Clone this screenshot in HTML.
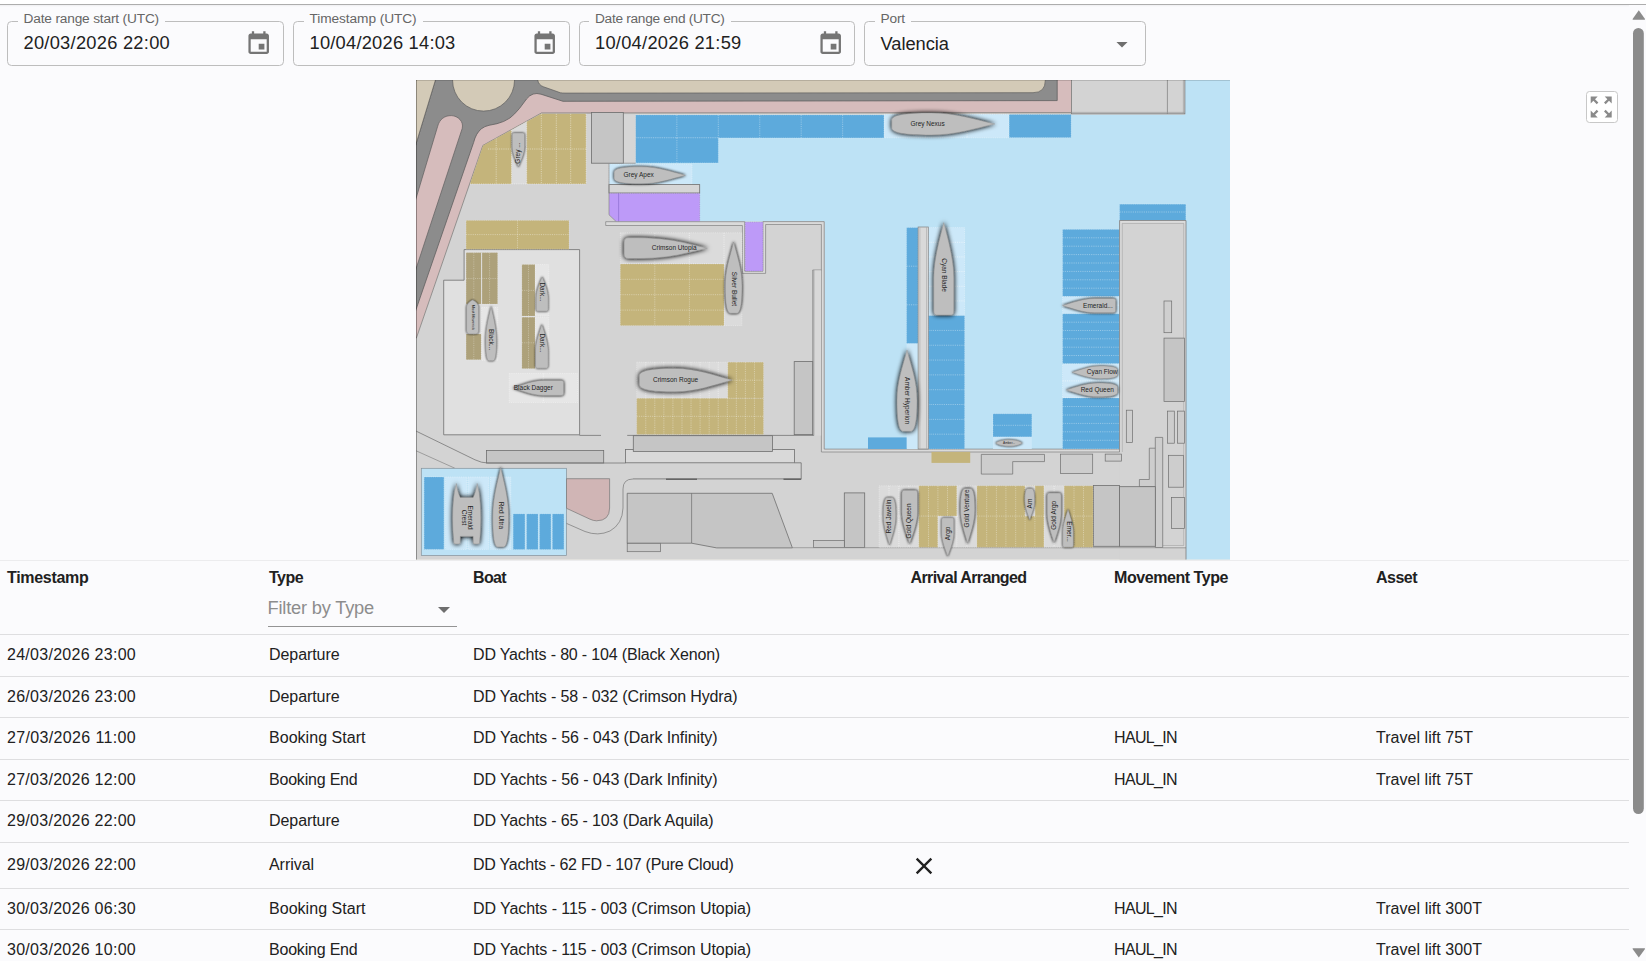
<!DOCTYPE html><html lang="en"><head><meta charset="utf-8"><title>Port movements</title><style>
*{box-sizing:border-box;margin:0;padding:0}
html,body{width:1646px;height:961px;overflow:hidden;background:#fbfbfd}
body{position:relative;font-family:"Liberation Sans",sans-serif;color:#212121}
.abs{position:absolute}
.topwhite{left:0;top:0;width:1646px;height:4px;background:#fff}
.topline{left:0;top:3.8px;width:1646px;height:1.3px;background:#adadad}
.topshade{left:0;top:5px;width:1646px;height:2px;background:linear-gradient(#efeff1,#fbfbfd)}
.field{top:21px;height:45px;width:277px;border:1px solid #bdbdbd;border-radius:4.5px}
.flabel{top:-10px;left:9.5px;padding:0 6px;background:#fbfbfd;font-size:13.7px;line-height:14px;color:#666;white-space:nowrap;position:absolute}
.fval{position:absolute;left:15.5px;top:10px;font-size:18.3px;line-height:22px;color:#212121;white-space:nowrap}
.cal{position:absolute;left:237px;top:7.5px;width:27.4px;height:27.4px}
.th{font-weight:bold;font-size:16px;line-height:20px;white-space:nowrap;color:#212121;top:568px}
.td{font-size:16px;line-height:20px;white-space:nowrap;color:#212121}
.hl{left:0;width:1629px;height:1px;background:#dedee0}
</style></head><body>
<div class="abs topwhite"></div><div class="abs topline"></div><div class="abs topshade"></div>
<div class="abs field" style="left:7px;width:276.5px"><span class="flabel" style="letter-spacing:-0.168px">Date range start (UTC)</span><span class="fval" style="letter-spacing:0.261px">20/03/2026 22:00</span><svg class="cal" viewBox="0 0 24 24"><path fill="#757575" d="M17 12h-5v5h5v-5zM16 1v2H8V1H6v2H5c-1.11 0-1.99.9-1.99 2L3 19c0 1.1.89 2 2 2h14c1.1 0 2-.9 2-2V5c0-1.1-.9-2-2-2h-1V1h-2zm3 18H5V8h14v11z"/></svg></div>
<div class="abs field" style="left:293px;width:276.5px"><span class="flabel" style="letter-spacing:-0.082px">Timestamp (UTC)</span><span class="fval" style="letter-spacing:0.229px">10/04/2026 14:03</span><svg class="cal" viewBox="0 0 24 24"><path fill="#757575" d="M17 12h-5v5h5v-5zM16 1v2H8V1H6v2H5c-1.11 0-1.99.9-1.99 2L3 19c0 1.1.89 2 2 2h14c1.1 0 2-.9 2-2V5c0-1.1-.9-2-2-2h-1V1h-2zm3 18H5V8h14v11z"/></svg></div>
<div class="abs field" style="left:578.5px;width:276.5px"><span class="flabel" style="letter-spacing:-0.296px">Date range end (UTC)</span><span class="fval" style="letter-spacing:0.261px">10/04/2026 21:59</span><svg class="cal" viewBox="0 0 24 24"><path fill="#757575" d="M17 12h-5v5h5v-5zM16 1v2H8V1H6v2H5c-1.11 0-1.99.9-1.99 2L3 19c0 1.1.89 2 2 2h14c1.1 0 2-.9 2-2V5c0-1.1-.9-2-2-2h-1V1h-2zm3 18H5V8h14v11z"/></svg></div>
<div class="abs field" style="left:864px;width:282px"><span class="flabel" style="letter-spacing:-0.152px">Port</span><span class="fval" style="letter-spacing:-0.035px;top:11px">Valencia</span><svg style="position:absolute;left:250.5px;top:20px;width:12px;height:6.5px" viewBox="0 0 12 7"><path fill="#6e6e6e" d="M0 0h12L6 6z"/></svg></div>
<div class="abs" style="left:1585.5px;top:91px;width:32.5px;height:32px;border:1px solid #c8c8c8;border-radius:3.5px;background:#fff"><svg style="position:absolute;left:0.8px;top:1.3px;width:28.4px;height:28px" viewBox="0 0 24 24"><path fill="#8a8a8a" d="M15 3l2.3 2.3-2.89 2.87 1.42 1.42L18.7 6.7 21 9V3h-6zM3 9l2.3-2.3 2.87 2.89 1.42-1.42L6.7 5.3 9 3H3v6zm6 12l-2.3-2.3 2.89-2.87-1.42-1.42L5.3 17.3 3 15v6h6zm12-6l-2.3 2.3-2.87-2.89-1.42 1.42 2.89 2.87L15 21h6v-6z"/></svg></div>
<svg class="abs" style="left:0;top:0" width="1646" height="961" viewBox="0 0 1646 961">
<defs><clipPath id="mc"><rect x="416" y="80" width="814" height="479.6"/></clipPath>
<filter id="sh0" x="-40%" y="-40%" width="180%" height="180%"><feGaussianBlur in="SourceAlpha" stdDeviation="0.9"/><feOffset dy="0.3"/><feComponentTransfer><feFuncA type="linear" slope="1.0"/></feComponentTransfer><feMerge><feMergeNode/><feMergeNode in="SourceGraphic"/></feMerge></filter>
<filter id="sh1" x="-40%" y="-40%" width="180%" height="180%"><feGaussianBlur in="SourceAlpha" stdDeviation="1.5"/><feOffset dy="0.3"/><feComponentTransfer><feFuncA type="linear" slope="1.2"/></feComponentTransfer><feMerge><feMergeNode/><feMergeNode in="SourceGraphic"/></feMerge></filter>
<filter id="sh2" x="-40%" y="-40%" width="180%" height="180%"><feGaussianBlur in="SourceAlpha" stdDeviation="2.4"/><feOffset dy="0.3"/><feComponentTransfer><feFuncA type="linear" slope="1.25"/></feComponentTransfer><feMerge><feMergeNode/><feMergeNode in="SourceGraphic"/></feMerge></filter>
</defs>
<g clip-path="url(#mc)">
<rect x="416" y="80" width="814" height="479.6" fill="#d3cab7"/>
<polygon points="410,356.5 482.9,145.4 541.1,113.2 1071.6,112.6 1071.6,70 410,70" fill="#d6bcbc"/>
<path d="M 410,163.7 L 438.5,70 L 1057.2,70 L 1057.2,100.6 L 563,101.3 L 541,94.2 Q 532.5,91.5 526.5,99 L 519.6,108.3 Q 514.5,114.5 509.8,118.1 Q 504,122 497,123.7 L 489,125.3 Q 484.5,126.3 481.5,128.7 Q 476,133 473.6,142.5 L 410,327 Z" fill="#8c8c8c" stroke="#5f5f5f" stroke-width="0.8"/>
<path d="M 410,218.5 L 437.6,126.5 C 439.5,119 445,115.4 451.5,115.6 C 458,115.9 464,121.5 462.2,128.5 L 410,287 Z" fill="#d6bcbc" stroke="#5f5f5f" stroke-width="0.7"/>
<polygon points="410,70 438.5,70 410,163.7" fill="#d3cab7" stroke="#5f5f5f" stroke-width="0.7"/>
<circle cx="483.55" cy="80.1" r="31" fill="#d3cab7" stroke="#5f5f5f" stroke-width="0.7"/>
<path d="M 537.7,70 L 537.7,80 Q 538.5,85 543.5,86.8 L 560.5,92.8 Q 562,93.1 566,93.1 L 1033,92.7 Q 1045.3,92.7 1045.3,80.5 L 1045.3,70 Z" fill="#d3cab7" stroke="#5f5f5f" stroke-width="0.7"/>
<polygon points="410,356.5 416.3,338.3 482.9,145.4 541.1,113.2 1071.6,113.2 1071.6,70 1184.9,70 1184.9,113.8 1186,113.8 1186,570 410,570" fill="#d3d3d3"/>
<line x1="416.3" y1="338.3" x2="482.9" y2="145.4" stroke="#777" stroke-width="0.7"/>
<line x1="482.9" y1="145.4" x2="541.1" y2="113.2" stroke="#777" stroke-width="0.7"/>
<line x1="541.1" y1="113" x2="1071.6" y2="112.7" stroke="#777" stroke-width="0.8"/>
<path d="M 635.4,114.8 L 1184.9,114.8 L 1184.9,70 L 1240,70 L 1240,570 L 1186,570 L 1186,220.5 L 1119.6,220.5 L 1119.6,449 L 824.6,449 L 824.6,221.5 L 699.7,221.5 L 699.7,193.2 L 699.7,184.5 L 609,184.5 L 609,163.4 L 635.4,163.4 Z" fill="#bde2f5"/>
<rect x="1071.6" y="70" width="113.3" height="43.8" fill="#d3d3d3" stroke="#7a7a7a" stroke-width="0.8"/>
<line x1="1167.4" y1="80" x2="1167.4" y2="113.8" stroke="#7a7a7a" stroke-width="0.7"/>
<line x1="1071.6" y1="112.4" x2="1184.9" y2="112.4" stroke="#999" stroke-width="0.6"/>
<line x1="1183.4" y1="80" x2="1183.4" y2="113.8" stroke="#999" stroke-width="0.6"/>
<rect x="635.4" y="115" width="248.7" height="22.9" fill="#5daadc"/>
<path d="M676.85 115V137.9M718.3 115V137.9M759.75 115V137.9M801.2 115V137.9M842.65 115V137.9" fill="none" stroke="#fff" stroke-opacity="0.55" stroke-width="0.65" stroke-dasharray="1.1 1.1"/>
<rect x="635.4" y="115" width="248.7" height="22.9" fill="none" stroke="#fff" stroke-opacity="0.33" stroke-width="0.7" stroke-dasharray="1.1 1.1"/>
<rect x="635.4" y="137.9" width="82.9" height="25" fill="#5daadc"/>
<path d="M676.9 137.9V162.9" fill="none" stroke="#fff" stroke-opacity="0.55" stroke-width="0.65" stroke-dasharray="1.1 1.1"/>
<rect x="635.4" y="137.9" width="82.9" height="25" fill="none" stroke="#fff" stroke-opacity="0.33" stroke-width="0.7" stroke-dasharray="1.1 1.1"/>
<rect x="884.1" y="114.3" width="124.5" height="23.5" fill="#cce8f9"/>
<path d="M925.5 114.3V137.8M967.1 114.3V137.8" fill="none" stroke="#fff" stroke-opacity="0.8" stroke-width="0.65" stroke-dasharray="1.1 1.1"/>
<rect x="884.1" y="114.3" width="124.5" height="23.5" fill="none" stroke="#fff" stroke-opacity="0.48" stroke-width="0.7" stroke-dasharray="1.1 1.1"/>
<rect x="1009.2" y="114.5" width="61.9" height="23.1" fill="#5daadc"/>
<rect x="1009.2" y="114.5" width="61.9" height="23.1" fill="none" stroke="#fff" stroke-opacity="0.33" stroke-width="0.7" stroke-dasharray="1.1 1.1"/>
<rect x="609" y="164.3" width="83" height="20" fill="#cce8f9"/>
<path d="M650.5 164.3V184.3" fill="none" stroke="#fff" stroke-opacity="0.8" stroke-width="0.65" stroke-dasharray="1.1 1.1"/>
<rect x="609" y="164.3" width="83" height="20" fill="none" stroke="#fff" stroke-opacity="0.48" stroke-width="0.7" stroke-dasharray="1.1 1.1"/>
<rect x="623.3" y="115" width="12.3" height="48.2" fill="#d6d6d6"/>
<line x1="623.3" y1="163.2" x2="635.6" y2="163.2" stroke="#8a8a8a" stroke-width="0.7"/>
<rect x="591.5" y="112.5" width="31.8" height="50.7" fill="#c5c5c5" stroke="#6e6e6e" stroke-width="0.8"/>
<rect x="609" y="184.6" width="90.7" height="8.4" fill="#d6d6d6" stroke="#6e6e6e" stroke-width="0.8"/>
<polygon points="609,193.4 699.7,193.4 699.7,221.7 616.3,221.7 609,214.8" fill="#bd9af8"/>
<line x1="618.6" y1="193.4" x2="618.6" y2="221.7" stroke="#8d6fd0" stroke-width="0.7"/>
<path d="M609 193.4H699.7V221.7" fill="none" stroke="#7a5cc0" stroke-opacity=".55" stroke-width="0.6" stroke-dasharray="1.1 1.1"/>
<line x1="609" y1="163.4" x2="609" y2="214.8" stroke="#8a8a8a" stroke-width="0.7"/>
<line x1="609" y1="214.8" x2="616.3" y2="221.7" stroke="#8a8a8a" stroke-width="0.7"/>
<path d="M 605.7,223.6 L 743.5,223.6 L 743.5,273 " fill="none" stroke="#dcdcdc" stroke-width="3.8"/>
<path d="M 605.7,221.7 L 744.7,221.7 L 744.7,271.2 L 762.9,271.2 L 762.9,221.6 L 824.2,221.6 L 824.2,449.1 L 1120.6,449.1 L 1120.6,220.4 L 1123,220.4 L 1123,452 L 821.4,452 L 821.4,224.5 L 765.6,224.5 L 765.6,273.4 L 742.4,273.4 L 742.4,225.5 L 605.7,225.5 Z" fill="#dadada" stroke="#808080" stroke-width="0.7"/>
<rect x="745.3" y="222.2" width="17.5" height="48.8" fill="#bd9af8"/>
<rect x="745.3" y="222.2" width="17.5" height="48.8" fill="none" stroke="#7a5cc0" stroke-opacity=".5" stroke-width="0.6" stroke-dasharray="1.1 1.1"/>
<path d="M 821.4,270 L 812.7,270 L 812.7,435.6" fill="none" stroke="#808080" stroke-width="0.7"/>
<rect x="813.1" y="270.4" width="8" height="165.2" fill="#d8d8d8"/>
<rect x="906.6" y="227.6" width="11.5" height="116" fill="#5daadc"/>
<path d="M906.6 266.2H918.1M906.6 304.8H918.1" fill="none" stroke="#fff" stroke-opacity="0.55" stroke-width="0.65" stroke-dasharray="1.1 1.1"/>
<rect x="906.6" y="227.6" width="11.5" height="116" fill="none" stroke="#fff" stroke-opacity="0.33" stroke-width="0.7" stroke-dasharray="1.1 1.1"/>
<rect x="906.6" y="343.6" width="11.5" height="105.4" fill="#cce8f9"/>
<rect x="868" y="437.4" width="38.6" height="11.6" fill="#5daadc"/>
<rect x="928.4" y="227.6" width="36.2" height="88" fill="#cce8f9"/>
<path d="M928.4 242.27H964.6M928.4 256.93H964.6M928.4 271.6H964.6M928.4 286.27H964.6M928.4 300.93H964.6" fill="none" stroke="#fff" stroke-opacity="0.8" stroke-width="0.65" stroke-dasharray="1.1 1.1"/>
<rect x="928.4" y="227.6" width="36.2" height="88" fill="none" stroke="#fff" stroke-opacity="0.48" stroke-width="0.7" stroke-dasharray="1.1 1.1"/>
<rect x="928.4" y="315.6" width="36.2" height="133.4" fill="#5daadc"/>
<path d="M928.4 330.42H964.6M928.4 345.24H964.6M928.4 360.07H964.6M928.4 374.89H964.6M928.4 389.71H964.6M928.4 404.53H964.6M928.4 419.36H964.6M928.4 434.18H964.6" fill="none" stroke="#fff" stroke-opacity="0.55" stroke-width="0.65" stroke-dasharray="1.1 1.1"/>
<rect x="928.4" y="315.6" width="36.2" height="133.4" fill="none" stroke="#fff" stroke-opacity="0.33" stroke-width="0.7" stroke-dasharray="1.1 1.1"/>
<rect x="918.1" y="227" width="10.2" height="222" fill="#d9d9d9" stroke="#808080" stroke-width="0.7"/>
<line x1="919.9" y1="227" x2="919.9" y2="449" stroke="#a8a8a8" stroke-width="0.6"/>
<line x1="926.5" y1="227" x2="926.5" y2="449" stroke="#a8a8a8" stroke-width="0.6"/>
<rect x="993" y="413.8" width="38.8" height="23.1" fill="#5daadc"/>
<path d="M993 425.3H1031.8" fill="none" stroke="#fff" stroke-opacity="0.55" stroke-width="0.65" stroke-dasharray="1.1 1.1"/>
<rect x="993" y="413.8" width="38.8" height="23.1" fill="none" stroke="#fff" stroke-opacity="0.33" stroke-width="0.7" stroke-dasharray="1.1 1.1"/>
<rect x="993" y="436.9" width="38.8" height="12" fill="#cce8f9"/>
<rect x="1062.6" y="229.4" width="57.2" height="67.2" fill="#5daadc"/>
<path d="M1062.6 237.8H1119.8M1062.6 246.2H1119.8M1062.6 254.6H1119.8M1062.6 263H1119.8M1062.6 271.4H1119.8M1062.6 279.8H1119.8M1062.6 288.2H1119.8" fill="none" stroke="#fff" stroke-opacity="0.55" stroke-width="0.65" stroke-dasharray="1.1 1.1"/>
<rect x="1062.6" y="229.4" width="57.2" height="67.2" fill="none" stroke="#fff" stroke-opacity="0.33" stroke-width="0.7" stroke-dasharray="1.1 1.1"/>
<rect x="1062.6" y="296.6" width="57.2" height="17.2" fill="#cce8f9"/>
<path d="M1062.6 305.2H1119.8" fill="none" stroke="#fff" stroke-opacity="0.8" stroke-width="0.65" stroke-dasharray="1.1 1.1"/>
<rect x="1062.6" y="296.6" width="57.2" height="17.2" fill="none" stroke="#fff" stroke-opacity="0.48" stroke-width="0.7" stroke-dasharray="1.1 1.1"/>
<rect x="1062.6" y="313.8" width="57.2" height="50" fill="#5daadc"/>
<path d="M1062.6 322.2H1119.8M1062.6 330.5H1119.8M1062.6 338.8H1119.8M1062.6 347.2H1119.8M1062.6 355.5H1119.8" fill="none" stroke="#fff" stroke-opacity="0.55" stroke-width="0.65" stroke-dasharray="1.1 1.1"/>
<rect x="1062.6" y="313.8" width="57.2" height="50" fill="none" stroke="#fff" stroke-opacity="0.33" stroke-width="0.7" stroke-dasharray="1.1 1.1"/>
<rect x="1062.6" y="363.8" width="57.2" height="34.2" fill="#cce8f9"/>
<path d="M1062.6 380.9H1119.8" fill="none" stroke="#fff" stroke-opacity="0.8" stroke-width="0.65" stroke-dasharray="1.1 1.1"/>
<rect x="1062.6" y="363.8" width="57.2" height="34.2" fill="none" stroke="#fff" stroke-opacity="0.48" stroke-width="0.7" stroke-dasharray="1.1 1.1"/>
<rect x="1062.6" y="398" width="57.2" height="50.9" fill="#5daadc"/>
<path d="M1062.6 406.5H1119.8M1062.6 415H1119.8M1062.6 423.4H1119.8M1062.6 431.8H1119.8M1062.6 440.3H1119.8" fill="none" stroke="#fff" stroke-opacity="0.55" stroke-width="0.65" stroke-dasharray="1.1 1.1"/>
<rect x="1062.6" y="398" width="57.2" height="50.9" fill="none" stroke="#fff" stroke-opacity="0.33" stroke-width="0.7" stroke-dasharray="1.1 1.1"/>
<rect x="1119.6" y="204.2" width="66.2" height="16.3" fill="#5daadc"/>
<path d="M1119.6 212H1185.8" fill="none" stroke="#fff" stroke-opacity="0.55" stroke-width="0.65" stroke-dasharray="1.1 1.1"/>
<rect x="1119.6" y="204.2" width="66.2" height="16.3" fill="none" stroke="#fff" stroke-opacity="0.33" stroke-width="0.7" stroke-dasharray="1.1 1.1"/>
<rect x="1119.6" y="220.5" width="66.4" height="349.5" fill="#d3d3d3"/>
<polygon points="1119.6,220.5 1186,220.5 1186,547.8 1162.7,547.8 1162.7,545.6 1183.8,545.6 1183.8,223.4 1122.2,223.4 1122.2,452 1119.6,452" fill="#dcdcdc"/>
<path d="M 1122.2,452 L 1122.2,223.4 L 1183.8,223.4 L 1183.8,545.6 L 1162.7,545.6" fill="none" stroke="#9c9c9c" stroke-width="0.6"/>
<path d="M 1119.6,452 L 1119.6,220.5 L 1186,220.5 L 1186,570" fill="none" stroke="#7c7c7c" stroke-width="0.8"/>
<line x1="1162.7" y1="547.8" x2="1186" y2="547.8" stroke="#808080" stroke-width="0.7"/>
<rect x="1164" y="301" width="7.7" height="31.7" fill="#cfcfcf" stroke="#6e6e6e" stroke-width="0.7"/>
<rect x="1164" y="338.1" width="20.4" height="63.3" fill="#c5c5c5" stroke="#6e6e6e" stroke-width="0.7"/>
<rect x="1126.3" y="410.2" width="6.3" height="32.3" fill="#cfcfcf" stroke="#6e6e6e" stroke-width="0.7"/>
<rect x="1167.5" y="411.1" width="6.8" height="32.1" fill="#cdcdcd" stroke="#6e6e6e" stroke-width="0.7"/>
<rect x="1177.4" y="411.1" width="7.1" height="32.1" fill="#cdcdcd" stroke="#6e6e6e" stroke-width="0.7"/>
<rect x="1168.4" y="455.3" width="15.2" height="31.9" fill="#cdcdcd" stroke="#6e6e6e" stroke-width="0.7"/>
<rect x="1171.4" y="497.4" width="13.1" height="31" fill="#cdcdcd" stroke="#6e6e6e" stroke-width="0.7"/>
<path d="M 1155.3,437.4 L 1162.7,437.4 L 1162.7,547.5 L 1155.3,547.5 L 1155.3,486.7 L 1139.4,486.7 L 1139.4,479.5 L 1149.3,479.5 L 1149.3,448.2 L 1155.3,448.2 Z" fill="#cdcdcd" stroke="#6e6e6e" stroke-width="0.7"/>
<line x1="1155.3" y1="448.2" x2="1155.3" y2="486.7" stroke="#6e6e6e" stroke-width="0.7"/>
<polygon points="464.1,249.6 579.6,249.6 579.6,434.8 443.7,434.8 443.7,280.2 464.1,280.2" fill="#e0e0e0" stroke="#6e6e6e" stroke-width="0.8"/>
<polygon points="541.1,113.8 586.1,113.8 586.1,183.9 470,183.9 483.1,145.6" fill="#c4b47b"/>
<polygon points="511.5,129.9 526.7,121.5 526.7,183.9 511.5,183.9" fill="#dbdbdb"/>
<path d="M496.2 138.4V183.9M511.5 129.9V183.9M526.7 121.5V183.9M541.3 113.8V183.9M556.3 113.8V183.9M570.7 113.8V183.9M488 149H586.1M470 183.9H586.1M586.1 113.8V183.9" fill="none" stroke="#fff" stroke-opacity=".55" stroke-width="0.8" stroke-dasharray="1.1 1.1"/>
<rect x="466.1" y="220.4" width="102.9" height="28.8" fill="#c4b47b"/>
<path d="M517.5 220.4V249.2M466.1 234.6H569" fill="none" stroke="#fff" stroke-opacity="0.55" stroke-width="0.65" stroke-dasharray="1.1 1.1"/>
<rect x="466.1" y="220.4" width="102.9" height="28.8" fill="none" stroke="#fff" stroke-opacity="0.33" stroke-width="0.7" stroke-dasharray="1.1 1.1"/>
<rect x="466.1" y="252.6" width="31.5" height="51.4" fill="#ada17a"/>
<path d="M473.8 252.6V304M481.6 252.6V304M489.6 252.6V304M466.1 278.5H497.6" fill="none" stroke="#fff" stroke-opacity="0.45" stroke-width="0.65" stroke-dasharray="1.1 1.1"/>
<rect x="466.1" y="252.6" width="31.5" height="51.4" fill="none" stroke="#fff" stroke-opacity="0.27" stroke-width="0.7" stroke-dasharray="1.1 1.1"/>
<rect x="481.1" y="252.6" width="1" height="51.4" fill="#e0e0e0"/>
<rect x="466.1" y="334" width="15.1" height="25.7" fill="#ada17a"/>
<path d="M473.8 334V359.7" fill="none" stroke="#fff" stroke-opacity="0.45" stroke-width="0.65" stroke-dasharray="1.1 1.1"/>
<rect x="466.1" y="334" width="15.1" height="25.7" fill="none" stroke="#fff" stroke-opacity="0.27" stroke-width="0.7" stroke-dasharray="1.1 1.1"/>
<rect x="481.7" y="307.5" width="16.1" height="52.8" fill="#e6e6e6"/>
<rect x="481.7" y="307.5" width="16.1" height="52.8" fill="none" stroke="#fff" stroke-opacity="0.48" stroke-width="0.7" stroke-dasharray="1.1 1.1"/>
<rect x="521.9" y="264.5" width="13.1" height="51.5" fill="#ada17a"/>
<path d="M528.5 264.5V316M521.9 290.4H535" fill="none" stroke="#fff" stroke-opacity="0.45" stroke-width="0.65" stroke-dasharray="1.1 1.1"/>
<rect x="521.9" y="264.5" width="13.1" height="51.5" fill="none" stroke="#fff" stroke-opacity="0.27" stroke-width="0.7" stroke-dasharray="1.1 1.1"/>
<rect x="521.9" y="317.2" width="13.1" height="51.4" fill="#ada17a"/>
<path d="M528.5 317.2V368.6M521.9 342.8H535" fill="none" stroke="#fff" stroke-opacity="0.45" stroke-width="0.65" stroke-dasharray="1.1 1.1"/>
<rect x="521.9" y="317.2" width="13.1" height="51.4" fill="none" stroke="#fff" stroke-opacity="0.27" stroke-width="0.7" stroke-dasharray="1.1 1.1"/>
<rect x="535.4" y="264.5" width="13.4" height="51.5" fill="#e6e6e6"/>
<rect x="535.4" y="264.5" width="13.4" height="51.5" fill="none" stroke="#fff" stroke-opacity="0.48" stroke-width="0.7" stroke-dasharray="1.1 1.1"/>
<rect x="535.4" y="317.2" width="13.4" height="51.4" fill="#e6e6e6"/>
<rect x="535.4" y="317.2" width="13.4" height="51.4" fill="none" stroke="#fff" stroke-opacity="0.48" stroke-width="0.7" stroke-dasharray="1.1 1.1"/>
<rect x="509.2" y="373.4" width="68.3" height="29.1" fill="#e6e6e6"/>
<path d="M543.3 373.4V402.5" fill="none" stroke="#fff" stroke-opacity="0.8" stroke-width="0.65" stroke-dasharray="1.1 1.1"/>
<rect x="509.2" y="373.4" width="68.3" height="29.1" fill="none" stroke="#fff" stroke-opacity="0.48" stroke-width="0.7" stroke-dasharray="1.1 1.1"/>
<rect x="620.3" y="232.8" width="121.6" height="30.7" fill="#dbdbdb"/>
<path d="M654.8 232.8V263.5M689.3 232.8V263.5M724 232.8V263.5" fill="none" stroke="#fff" stroke-opacity="0.8" stroke-width="0.65" stroke-dasharray="1.1 1.1"/>
<rect x="620.3" y="232.8" width="121.6" height="30.7" fill="none" stroke="#fff" stroke-opacity="0.48" stroke-width="0.7" stroke-dasharray="1.1 1.1"/>
<rect x="724" y="263.5" width="17.9" height="62.1" fill="#dbdbdb"/>
<rect x="724" y="263.5" width="17.9" height="62.1" fill="none" stroke="#fff" stroke-opacity="0.48" stroke-width="0.7" stroke-dasharray="1.1 1.1"/>
<rect x="620.3" y="264" width="103.7" height="61.6" fill="#c4b47b"/>
<path d="M654.8 264V325.6M689.4 264V325.6M620.3 279.3H724M620.3 294.7H724M620.3 310.1H724" fill="none" stroke="#fff" stroke-opacity="0.55" stroke-width="0.65" stroke-dasharray="1.1 1.1"/>
<rect x="620.3" y="264" width="103.7" height="61.6" fill="none" stroke="#fff" stroke-opacity="0.33" stroke-width="0.7" stroke-dasharray="1.1 1.1"/>
<rect x="636.7" y="362.2" width="91.1" height="36.1" fill="#dbdbdb"/>
<path d="M645.76 362.2V398.3M654.81 362.2V398.3M663.87 362.2V398.3M672.93 362.2V398.3M681.99 362.2V398.3M691.04 362.2V398.3M700.1 362.2V398.3M709.16 362.2V398.3M718.21 362.2V398.3M636.7 380.2H727.8" fill="none" stroke="#fff" stroke-opacity="0.7" stroke-width="0.65" stroke-dasharray="1.1 1.1"/>
<rect x="636.7" y="362.2" width="91.1" height="36.1" fill="none" stroke="#fff" stroke-opacity="0.42" stroke-width="0.7" stroke-dasharray="1.1 1.1"/>
<rect x="727.8" y="362.2" width="35.7" height="36.1" fill="#c4b47b"/>
<path d="M736.33 362.2V398.3M745.38 362.2V398.3M754.44 362.2V398.3M727.8 380.2H763.5" fill="none" stroke="#fff" stroke-opacity="0.55" stroke-width="0.65" stroke-dasharray="1.1 1.1"/>
<rect x="727.8" y="362.2" width="35.7" height="36.1" fill="none" stroke="#fff" stroke-opacity="0.33" stroke-width="0.7" stroke-dasharray="1.1 1.1"/>
<rect x="636.7" y="398.3" width="126.8" height="36.2" fill="#c4b47b"/>
<path d="M645.76 398.3V434.5M654.81 398.3V434.5M663.87 398.3V434.5M672.93 398.3V434.5M681.99 398.3V434.5M691.04 398.3V434.5M700.1 398.3V434.5M709.16 398.3V434.5M718.21 398.3V434.5M727.27 398.3V434.5M736.33 398.3V434.5M745.38 398.3V434.5M754.44 398.3V434.5M636.7 416.3H763.5" fill="none" stroke="#fff" stroke-opacity="0.55" stroke-width="0.65" stroke-dasharray="1.1 1.1"/>
<rect x="636.7" y="398.3" width="126.8" height="36.2" fill="none" stroke="#fff" stroke-opacity="0.33" stroke-width="0.7" stroke-dasharray="1.1 1.1"/>
<line x1="813.8" y1="270" x2="813.8" y2="435.6" stroke="#808080" stroke-width="0.7"/>
<rect x="794.2" y="361.6" width="18.5" height="73" fill="#c5c5c5" stroke="#6e6e6e" stroke-width="0.8"/>
<line x1="579.4" y1="435.4" x2="601" y2="435.4" stroke="#808080" stroke-width="0.9"/>
<line x1="627.2" y1="435.4" x2="813.8" y2="435.4" stroke="#808080" stroke-width="0.9"/>
<path d="M 794.6,462.8 L 801.2,462.8 L 801.2,478.9 L 633,478.9" fill="none" stroke="#6e6e6e" stroke-width="0.8"/>
<rect x="625.5" y="449.5" width="169.1" height="13.3" fill="#d9d9d9" stroke="#6e6e6e" stroke-width="0.8"/>
<rect x="633.3" y="435.7" width="139.1" height="15.7" fill="#c5c5c5" stroke="#6e6e6e" stroke-width="0.8"/>
<path d="M666 479.3H697M783.5 479.3H801.2" stroke="#666" stroke-width="1.4" fill="none"/>
<rect x="486.4" y="450.4" width="117.3" height="12.6" fill="#c5c5c5" stroke="#6e6e6e" stroke-width="0.8"/>
<path d="M 416.3,431.2 L 475,459.8 Q 481.5,463 488,463 L 625.5,463" fill="none" stroke="#777" stroke-width="0.8"/>
<line x1="416.3" y1="450.9" x2="454.8" y2="468.2" stroke="#777" stroke-width="0.6"/>
<rect x="421.3" y="468.3" width="145.2" height="87.1" fill="#bde2f5" stroke="#84929a" stroke-width="0.7"/>
<rect x="424.1" y="477" width="19.8" height="72.4" fill="#5daadc"/>
<rect x="424.1" y="477" width="19.8" height="72.4" fill="none" stroke="#fff" stroke-opacity=".4" stroke-width="0.7" stroke-dasharray="1.1 1.1"/>
<rect x="445.6" y="477" width="21.4" height="72.4" fill="#cce8f9"/>
<rect x="445.6" y="477" width="21.4" height="72.4" fill="none" stroke="#fff" stroke-opacity="0.48" stroke-width="0.7" stroke-dasharray="1.1 1.1"/>
<rect x="468" y="477" width="20.8" height="72.4" fill="#cce8f9"/>
<rect x="468" y="477" width="20.8" height="72.4" fill="none" stroke="#fff" stroke-opacity="0.48" stroke-width="0.7" stroke-dasharray="1.1 1.1"/>
<rect x="490.4" y="477" width="20.4" height="72.4" fill="#cce8f9"/>
<rect x="490.4" y="477" width="20.4" height="72.4" fill="none" stroke="#fff" stroke-opacity="0.48" stroke-width="0.7" stroke-dasharray="1.1 1.1"/>
<rect x="513.2" y="513.9" width="11.7" height="35.6" fill="#5daadc"/>
<rect x="513.2" y="513.9" width="11.7" height="35.6" fill="none" stroke="#fff" stroke-opacity="0.3" stroke-width="0.7" stroke-dasharray="1.1 1.1"/>
<rect x="526.6" y="513.9" width="11.4" height="35.6" fill="#5daadc"/>
<rect x="526.6" y="513.9" width="11.4" height="35.6" fill="none" stroke="#fff" stroke-opacity="0.3" stroke-width="0.7" stroke-dasharray="1.1 1.1"/>
<rect x="539.6" y="513.9" width="11.3" height="35.6" fill="#5daadc"/>
<rect x="539.6" y="513.9" width="11.3" height="35.6" fill="none" stroke="#fff" stroke-opacity="0.3" stroke-width="0.7" stroke-dasharray="1.1 1.1"/>
<rect x="552.4" y="513.9" width="11.5" height="35.6" fill="#5daadc"/>
<rect x="552.4" y="513.9" width="11.5" height="35.6" fill="none" stroke="#fff" stroke-opacity="0.3" stroke-width="0.7" stroke-dasharray="1.1 1.1"/>
<path d="M 566.5,478.7 L 609.6,478.7 L 609.6,508 Q 609.6,520.8 596.5,520.8 Q 593.5,520.8 590,519.2 L 566.5,508.3 Z" fill="#d0b5b5" stroke="#777" stroke-width="0.7"/>
<path d="M 566.5,523.4 L 585,531.5 Q 598,536.5 610,531 Q 622.5,524 623,508 L 623,489 Q 623,479 633,479" fill="none" stroke="#777" stroke-width="0.7"/>
<path d="M 627.2,493.3 L 772.2,493.3 L 792.4,547.9 L 716.7,547.9 L 691.6,543.2 L 627.2,543.2 Z" fill="#c5c5c5" stroke="#6e6e6e" stroke-width="0.8"/>
<line x1="691.6" y1="493.3" x2="691.6" y2="543.2" stroke="#6e6e6e" stroke-width="0.7"/>
<rect x="627.2" y="543.3" width="33.4" height="8.4" fill="#cbcbcb" stroke="#6e6e6e" stroke-width="0.7"/>
<rect x="844.3" y="492.9" width="20.4" height="54.6" fill="#c5c5c5" stroke="#6e6e6e" stroke-width="0.8"/>
<rect x="813.4" y="540.4" width="30.9" height="7.1" fill="#cbcbcb" stroke="#6e6e6e" stroke-width="0.7"/>
<line x1="792.4" y1="547.7" x2="1162.7" y2="547.7" stroke="#8a8a8a" stroke-width="0.7"/>
<rect x="931.5" y="451.9" width="38.7" height="11" fill="#c4b47b"/>
<path d="M 981.3,454.4 L 1044.5,454.4 L 1044.5,461.6 L 1012.7,461.6 L 1012.7,474.1 L 981.3,474.1 Z" fill="#cdcdcd" stroke="#6e6e6e" stroke-width="0.7"/>
<rect x="1060.5" y="454.1" width="32.2" height="19.5" fill="#cdcdcd" stroke="#6e6e6e" stroke-width="0.7"/>
<rect x="1105.2" y="454.1" width="16.3" height="7" fill="#cdcdcd" stroke="#6e6e6e" stroke-width="0.7"/>
<rect x="1093.6" y="485.4" width="25.8" height="60.9" fill="#c5c5c5" stroke="#6e6e6e" stroke-width="0.8"/>
<rect x="1119.5" y="486.7" width="35.8" height="59.6" fill="#c5c5c5" stroke="#6e6e6e" stroke-width="0.8"/>
<rect x="879.1" y="485.8" width="39.7" height="61.5" fill="#dbdbdb"/>
<path d="M889 485.8V547.3M898.9 485.8V547.3M908.9 485.8V547.3M879.1 516.1H918.8" fill="none" stroke="#fff" stroke-opacity="0.8" stroke-width="0.65" stroke-dasharray="1.1 1.1"/>
<rect x="879.1" y="485.8" width="39.7" height="61.5" fill="none" stroke="#fff" stroke-opacity="0.48" stroke-width="0.7" stroke-dasharray="1.1 1.1"/>
<rect x="918.8" y="485.8" width="38.1" height="30.3" fill="#c4b47b"/>
<path d="M928.5 485.8V516.1M937.9 485.8V516.1M947.5 485.8V516.1" fill="none" stroke="#fff" stroke-opacity="0.55" stroke-width="0.65" stroke-dasharray="1.1 1.1"/>
<rect x="918.8" y="485.8" width="38.1" height="30.3" fill="none" stroke="#fff" stroke-opacity="0.33" stroke-width="0.7" stroke-dasharray="1.1 1.1"/>
<rect x="918.8" y="516.1" width="19.1" height="31.2" fill="#c4b47b"/>
<path d="M928.5 516.1V547.3" fill="none" stroke="#fff" stroke-opacity="0.55" stroke-width="0.65" stroke-dasharray="1.1 1.1"/>
<rect x="918.8" y="516.1" width="19.1" height="31.2" fill="none" stroke="#fff" stroke-opacity="0.33" stroke-width="0.7" stroke-dasharray="1.1 1.1"/>
<rect x="937.9" y="516.1" width="19" height="31.2" fill="#dbdbdb"/>
<rect x="937.9" y="516.1" width="19" height="31.2" fill="none" stroke="#fff" stroke-opacity="0.48" stroke-width="0.7" stroke-dasharray="1.1 1.1"/>
<rect x="956.9" y="485.8" width="20" height="61.5" fill="#dbdbdb"/>
<path d="M966.9 485.8V547.3M956.9 516.1H976.9" fill="none" stroke="#fff" stroke-opacity="0.8" stroke-width="0.65" stroke-dasharray="1.1 1.1"/>
<rect x="956.9" y="485.8" width="20" height="61.5" fill="none" stroke="#fff" stroke-opacity="0.48" stroke-width="0.7" stroke-dasharray="1.1 1.1"/>
<rect x="976.9" y="485.8" width="67.1" height="61.5" fill="#c4b47b"/>
<path d="M986.7 485.8V547.3M996.4 485.8V547.3M1005.9 485.8V547.3M1015.7 485.8V547.3M1025.1 485.8V547.3M1034.9 485.8V547.3M976.9 516.1H1044" fill="none" stroke="#fff" stroke-opacity="0.55" stroke-width="0.65" stroke-dasharray="1.1 1.1"/>
<rect x="976.9" y="485.8" width="67.1" height="61.5" fill="none" stroke="#fff" stroke-opacity="0.33" stroke-width="0.7" stroke-dasharray="1.1 1.1"/>
<rect x="1025.1" y="485.8" width="9.8" height="30.3" fill="#dbdbdb"/>
<rect x="1025.1" y="485.8" width="9.8" height="30.3" fill="none" stroke="#fff" stroke-opacity="0.48" stroke-width="0.7" stroke-dasharray="1.1 1.1"/>
<rect x="1044" y="485.8" width="20.2" height="61.5" fill="#dbdbdb"/>
<path d="M1054.1 485.8V547.3M1044 516.1H1064.2" fill="none" stroke="#fff" stroke-opacity="0.8" stroke-width="0.65" stroke-dasharray="1.1 1.1"/>
<rect x="1044" y="485.8" width="20.2" height="61.5" fill="none" stroke="#fff" stroke-opacity="0.48" stroke-width="0.7" stroke-dasharray="1.1 1.1"/>
<rect x="1064.2" y="485.8" width="28.8" height="61.5" fill="#c4b47b"/>
<path d="M1074 485.8V547.3M1083.5 485.8V547.3M1064.2 516.1H1093" fill="none" stroke="#fff" stroke-opacity="0.55" stroke-width="0.65" stroke-dasharray="1.1 1.1"/>
<rect x="1064.2" y="485.8" width="28.8" height="61.5" fill="none" stroke="#fff" stroke-opacity="0.33" stroke-width="0.7" stroke-dasharray="1.1 1.1"/>
<g fill="#bebebe" stroke="#808080" stroke-width="0.35"><path filter="url(#sh2)" d="M 891.8 120.08 C 891.8 115.11 904.17 112.9 930.98 112.9 C 955.72 112.9 974.28 119.31 994.9 123.95 C 974.28 128.59 955.72 135 930.98 135 C 904.17 135 891.8 132.79 891.8 127.82 Z"/><path filter="url(#sh1)" d="M 614.1 172.33 C 614.1 168.5 622.67 166.8 641.23 166.8 C 658.37 166.8 671.22 171.73 685.5 175.3 C 671.22 178.87 658.37 183.8 641.23 183.8 C 622.67 183.8 614.1 182.1 614.1 178.28 Z"/><path filter="url(#sh0)" d="M 513.75 133 Q 512.2 133 512.2 134.7 L 512.2 146.6 C 512.2 153.4 515.8 160.88 518.4 167 C 521 160.88 524.6 153.4 524.6 146.6 L 524.6 134.7 Q 524.6 133 523.05 133 Z"/><path filter="url(#sh2)" d="M 624.1 242.35 Q 624.1 237.92 628.27 237.81 C 649.12 237.28 669.97 239.29 682.48 242.35 C 690.82 244.25 699.16 246.25 707.5 248.15 C 699.16 250.05 690.82 252.05 682.48 253.95 C 669.97 257.01 649.12 259.02 628.27 258.49 Q 624.1 258.38 624.1 253.95 Z"/><path filter="url(#sh1)" d="M 730.73 313.3 C 726.97 313.3 725.3 304.73 725.3 286.17 C 725.3 269.03 730.14 256.18 733.65 241.9 C 737.16 256.18 742 269.03 742 286.17 C 742 304.73 740.33 313.3 736.57 313.3 Z"/><path filter="url(#sh2)" d="M 639.3 376 C 639.3 370.74 650.45 368.4 674.6 368.4 C 696.9 368.4 713.62 375.19 732.2 380.1 C 713.62 385.01 696.9 391.8 674.6 391.8 C 650.45 391.8 639.3 389.46 639.3 384.2 Z"/><path filter="url(#sh0)" d="M 466.6 330.52 L 466.6 307.54 C 466.6 304.16 469.6 301.45 472.6 300.1 C 475.6 301.45 478.6 304.16 478.6 307.54 L 478.6 330.52 Q 478.6 333.9 475.9 333.9 L 469.3 333.9 Q 466.6 333.9 466.6 330.52 Z"/><path filter="url(#sh0)" d="M 489.18 360.8 C 486.77 360.8 485.7 354.27 485.7 340.13 C 485.7 327.07 488.8 317.28 491.05 306.4 C 493.3 317.28 496.4 327.07 496.4 340.13 C 496.4 354.27 495.33 360.8 492.92 360.8 Z"/><path filter="url(#sh0)" d="M 537.69 311.2 Q 536.2 311.2 536.2 309.48 L 536.2 297.44 C 536.2 290.56 539.65 282.99 542.15 276.8 C 544.65 282.99 548.1 290.56 548.1 297.44 L 548.1 309.48 Q 548.1 311.2 546.61 311.2 Z"/><path filter="url(#sh0)" d="M 537.16 368.2 Q 535.6 368.2 535.6 366.01 L 535.6 350.72 C 535.6 341.98 539.23 332.37 541.85 324.5 C 544.48 332.37 548.1 341.98 548.1 350.72 L 548.1 366.01 Q 548.1 368.2 546.54 368.2 Z"/><path filter="url(#sh1)" d="M 563.7 382.27 Q 563.7 380.4 561.18 380.4 L 543.5 380.4 C 533.4 380.4 522.29 384.75 513.2 387.9 C 522.29 391.05 533.4 395.4 543.5 395.4 L 561.18 395.4 Q 563.7 395.4 563.7 393.52 Z"/><path filter="url(#sh2)" d="M 936.3 315 Q 933.8 315 933.8 310.38 L 933.8 278 C 933.8 259.5 939.6 239.15 943.8 222.5 C 948 239.15 953.8 259.5 953.8 278 L 953.8 310.38 Q 953.8 315 951.3 315 Z"/><path filter="url(#sh2)" d="M 903.5 431.3 C 899 431.3 897 421.54 897 400.41 C 897 380.89 902.8 366.26 907 350 C 911.2 366.26 917 380.89 917 400.41 C 917 421.54 915 431.3 910.5 431.3 Z"/><path filter="url(#sh1)" d="M 1115.7 300.28 Q 1115.7 298.5 1113.04 298.5 L 1094.42 298.5 C 1083.78 298.5 1072.08 302.62 1062.5 305.6 C 1072.08 308.58 1083.78 312.7 1094.42 312.7 L 1113.04 312.7 Q 1115.7 312.7 1115.7 310.93 Z"/><path filter="url(#sh0)" d="M 1117.6 370.06 C 1117.6 367.18 1112.12 365.9 1100.23 365.9 C 1089.27 365.9 1081.04 369.61 1071.9 372.3 C 1081.04 374.99 1089.27 378.7 1100.23 378.7 C 1112.12 378.7 1117.6 377.42 1117.6 374.54 Z"/><path filter="url(#sh1)" d="M 1117.6 387.48 C 1117.6 384.38 1111.43 383 1098.07 383 C 1085.73 383 1076.48 387 1066.2 389.9 C 1076.48 392.8 1085.73 396.8 1098.07 396.8 C 1111.43 396.8 1117.6 395.42 1117.6 392.31 Z"/><path filter="url(#sh0)" d="M 995.6 443 C 1000.98 438.7 1017.12 438.7 1022.5 443 C 1017.12 447.3 1000.98 447.3 995.6 443 Z"/><path filter="url(#sh2)" d="M 453.97 543.69 C 452.11 526.03 452.11 507.76 454.4 491.93 L 456.26 483.4 C 457.26 489.49 458.69 494.36 460.26 497.41 L 473.13 497.41 C 474.71 494.36 476.14 489.49 477.14 483.4 L 479 491.93 C 481.29 507.76 481.29 526.03 479.43 543.69 Q 476.28 544.3 473.28 543.69 L 473.13 536.38 L 460.26 536.38 L 460.12 543.69 Q 457.12 544.3 453.97 543.69 Z"/><path filter="url(#sh1)" d="M 497.94 546.9 C 494.38 546.9 492.8 537.35 492.8 516.65 C 492.8 497.55 497.38 483.22 500.7 467.3 C 504.02 483.22 508.6 497.55 508.6 516.65 C 508.6 537.35 507.02 546.9 503.47 546.9 Z"/><path filter="url(#sh0)" d="M 887.36 497.6 C 884.55 497.6 883.3 503.3 883.3 515.65 C 883.3 527.05 886.92 535.6 889.55 545.1 C 892.17 535.6 895.8 527.05 895.8 515.65 C 895.8 503.3 894.55 497.6 891.74 497.6 Z"/><path filter="url(#sh1)" d="M 903.85 490.3 Q 901.9 490.3 901.9 492.97 L 901.9 511.66 C 901.9 522.34 906.42 534.09 909.7 543.7 C 912.98 534.09 917.5 522.34 917.5 511.66 L 917.5 492.97 Q 917.5 490.3 915.55 490.3 Z"/><path filter="url(#sh0)" d="M 943.21 517.8 Q 941.7 517.8 941.7 519.72 L 941.7 533.16 C 941.7 540.84 945.21 549.29 947.75 556.2 C 950.29 549.29 953.8 540.84 953.8 533.16 L 953.8 519.72 Q 953.8 517.8 952.29 517.8 Z"/><path filter="url(#sh1)" d="M 965.15 488.5 C 961.93 488.5 960.5 495.09 960.5 509.36 C 960.5 522.54 964.65 532.42 967.65 543.4 C 970.65 532.42 974.8 522.54 974.8 509.36 C 974.8 495.09 973.37 488.5 970.15 488.5 Z"/><path filter="url(#sh0)" d="M 1027.98 488.5 C 1025.78 488.5 1024.8 492.27 1024.8 500.43 C 1024.8 507.97 1027.64 513.62 1029.7 519.9 C 1031.76 513.62 1034.6 507.97 1034.6 500.43 C 1034.6 492.27 1033.62 488.5 1031.41 488.5 Z"/><path filter="url(#sh1)" d="M 1048.94 493.1 Q 1047.2 493.1 1047.2 495.58 L 1047.2 512.9 C 1047.2 522.8 1051.23 533.69 1054.15 542.6 C 1057.07 533.69 1061.1 522.8 1061.1 512.9 L 1061.1 495.58 Q 1061.1 493.1 1059.36 493.1 Z"/><path filter="url(#sh0)" d="M 1064.11 547.2 Q 1062.8 547.2 1062.8 545.31 L 1062.8 532.08 C 1062.8 524.52 1065.85 516.2 1068.05 509.4 C 1070.25 516.2 1073.3 524.52 1073.3 532.08 L 1073.3 545.31 Q 1073.3 547.2 1071.99 547.2 Z"/></g>
<g font-family="'Liberation Sans',sans-serif" fill="#1e1e1e" text-anchor="middle" dominant-baseline="central"><text x="927.6" y="123.9" dy="-0.6" font-size="6.5">Grey Nexus</text><text x="638.6" y="174.8" dy="-0.6" font-size="6.5">Grey Apex</text><text x="518.4" y="153" dy="-0.6" font-size="6.5" transform="rotate(-90 518.4 153)">Grey ...</text><text x="674.2" y="247.7" dy="-0.6" font-size="6.5">Crimson Utopia</text><text x="733.6" y="289" dy="-0.6" font-size="6.5" transform="rotate(90 733.6 289)">Silver Bullet</text><text x="675.6" y="379.6" dy="-0.6" font-size="6.5">Crimson Rogue</text><text x="472.7" y="317.4" dy="-0.6" font-size="3.9" transform="rotate(90 472.7 317.4)">Mast Maverick</text><text x="491.1" y="339.6" dy="-0.6" font-size="6.5" transform="rotate(90 491.1 339.6)">Black...</text><text x="542.3" y="292" dy="-0.6" font-size="6.5" transform="rotate(90 542.3 292)">Dark...</text><text x="542.3" y="343" dy="-0.6" font-size="6.5" transform="rotate(90 542.3 343)">Dark...</text><text x="533.3" y="387.9" dy="-0.6" font-size="6.5">Black Dagger</text><text x="943.8" y="275" dy="-0.6" font-size="6.5" transform="rotate(90 943.8 275)">Cyan Blade</text><text x="907" y="400.6" dy="-0.6" font-size="6.5" transform="rotate(90 907 400.6)">Amber Hyperion</text><text x="1097.9" y="305.9" dy="-0.6" font-size="6.5">Emerald...</text><text x="1102.2" y="372.2" dy="-0.6" font-size="6.5">Cyan Flow</text><text x="1097.3" y="390.1" dy="-0.6" font-size="6.5">Red Queen</text><text x="1009" y="443.1" dy="-0.6" font-size="3.2">Amber...</text><text font-size="6.5" transform="rotate(90 467.1 517.5)"><tspan x="467.1" y="513.72">Emerald</tspan><tspan x="467.1" y="520.08">Crest</tspan></text><text x="501.3" y="515.4" dy="-0.6" font-size="6.5" transform="rotate(90 501.3 515.4)">Red Ultra</text><text x="889.6" y="516.5" dy="-0.6" font-size="6.5" transform="rotate(-90 889.6 516.5)">Red Javelin</text><text x="909.2" y="521" dy="-0.6" font-size="6.5" transform="rotate(-90 909.2 521)">Gold Queen</text><text x="948.2" y="533.5" dy="-0.6" font-size="6.5" transform="rotate(-90 948.2 533.5)">Argo</text><text x="967.2" y="508.4" dy="-0.6" font-size="6.5" transform="rotate(-90 967.2 508.4)">Gold Venture</text><text x="1030.2" y="503.5" dy="-0.6" font-size="6.5" transform="rotate(-90 1030.2 503.5)">Am</text><text x="1054.6" y="515.3" dy="-0.6" font-size="6.5" transform="rotate(-90 1054.6 515.3)">Gold Argo</text><text x="1068.8" y="531.6" dy="-0.6" font-size="6.5" transform="rotate(90 1068.8 531.6)">Emer...</text></g>
</g>
<path d="M416.5 80V559.6" stroke="#000" stroke-opacity=".33" stroke-width="1" fill="none"/>
<path d="M416 80.5H1230" stroke="#000" stroke-opacity=".14" stroke-width="1" fill="none"/>
</svg>
<div class="abs hl" style="top:559.5px;background:#ececee"></div>
<div class="abs th" style="left:7px;letter-spacing:-0.299px">Timestamp</div>
<div class="abs th" style="left:269px;letter-spacing:-0.539px">Type</div>
<div class="abs th" style="left:473px;letter-spacing:-0.641px">Boat</div>
<div class="abs th" style="left:910.5px;letter-spacing:-0.604px">Arrival Arranged</div>
<div class="abs th" style="left:1114px;letter-spacing:-0.441px">Movement Type</div>
<div class="abs th" style="left:1376px;letter-spacing:-0.516px">Asset</div>
<div class="abs" style="left:267.5px;top:597px;font-size:18.3px;line-height:22px;color:#8d8d8d;white-space:nowrap;letter-spacing:-0.208px">Filter by Type</div>
<svg class="abs" style="left:437.5px;top:607px;width:12px;height:7px" viewBox="0 0 12 7"><path fill="#6e6e6e" d="M0 0h12L6 6z"/></svg>
<div class="abs" style="left:267.5px;top:626px;width:189.5px;height:1px;background:#949494"></div>
<div class="abs hl" style="top:633.5px"></div>
<div class="abs hl" style="top:675.5px"></div>
<div class="abs hl" style="top:717.0px"></div>
<div class="abs hl" style="top:758.5px"></div>
<div class="abs hl" style="top:800.0px"></div>
<div class="abs hl" style="top:841.5px"></div>
<div class="abs hl" style="top:887.5px"></div>
<div class="abs hl" style="top:929.0px"></div>
<div class="abs td" style="left:7px;top:645px;letter-spacing:0.277px">24/03/2026 23:00</div>
<div class="abs td" style="left:269px;top:645px;letter-spacing:-0.073px">Departure</div>
<div class="abs td" style="left:473px;top:645px;letter-spacing:-0.172px">DD Yachts - 80 - 104 (Black Xenon)</div>
<div class="abs td" style="left:7px;top:686.75px;letter-spacing:0.277px">26/03/2026 23:00</div>
<div class="abs td" style="left:269px;top:686.75px;letter-spacing:-0.073px">Departure</div>
<div class="abs td" style="left:473px;top:686.75px;letter-spacing:-0.145px">DD Yachts - 58 - 032 (Crimson Hydra)</div>
<div class="abs td" style="left:7px;top:728.25px;letter-spacing:0.352px">27/03/2026 11:00</div>
<div class="abs td" style="left:269px;top:728.25px;letter-spacing:0.034px">Booking Start</div>
<div class="abs td" style="left:473px;top:728.25px;letter-spacing:-0.083px">DD Yachts - 56 - 043 (Dark Infinity)</div>
<div class="abs td" style="left:1114px;top:728.25px;letter-spacing:-0.654px">HAUL_IN</div>
<div class="abs td" style="left:1376px;top:728.25px;letter-spacing:0.045px">Travel lift 75T</div>
<div class="abs td" style="left:7px;top:769.75px;letter-spacing:0.277px">27/03/2026 12:00</div>
<div class="abs td" style="left:269px;top:769.75px;letter-spacing:-0.203px">Booking End</div>
<div class="abs td" style="left:473px;top:769.75px;letter-spacing:-0.083px">DD Yachts - 56 - 043 (Dark Infinity)</div>
<div class="abs td" style="left:1114px;top:769.75px;letter-spacing:-0.654px">HAUL_IN</div>
<div class="abs td" style="left:1376px;top:769.75px;letter-spacing:0.045px">Travel lift 75T</div>
<div class="abs td" style="left:7px;top:811.25px;letter-spacing:0.277px">29/03/2026 22:00</div>
<div class="abs td" style="left:269px;top:811.25px;letter-spacing:-0.073px">Departure</div>
<div class="abs td" style="left:473px;top:811.25px;letter-spacing:-0.128px">DD Yachts - 65 - 103 (Dark Aquila)</div>
<div class="abs td" style="left:7px;top:855px;letter-spacing:0.277px">29/03/2026 22:00</div>
<div class="abs td" style="left:269px;top:855px;letter-spacing:-0.049px">Arrival</div>
<div class="abs td" style="left:473px;top:855px;letter-spacing:-0.232px">DD Yachts - 62 FD - 107 (Pure Cloud)</div>
<div class="abs td" style="left:7px;top:898.75px;letter-spacing:0.277px">30/03/2026 06:30</div>
<div class="abs td" style="left:269px;top:898.75px;letter-spacing:0.034px">Booking Start</div>
<div class="abs td" style="left:473px;top:898.75px;letter-spacing:-0.079px">DD Yachts - 115 - 003 (Crimson Utopia)</div>
<div class="abs td" style="left:1114px;top:898.75px;letter-spacing:-0.654px">HAUL_IN</div>
<div class="abs td" style="left:1376px;top:898.75px;letter-spacing:0.049px">Travel lift 300T</div>
<div class="abs td" style="left:7px;top:940.25px;letter-spacing:0.277px">30/03/2026 10:00</div>
<div class="abs td" style="left:269px;top:940.25px;letter-spacing:-0.203px">Booking End</div>
<div class="abs td" style="left:473px;top:940.25px;letter-spacing:-0.079px">DD Yachts - 115 - 003 (Crimson Utopia)</div>
<div class="abs td" style="left:1114px;top:940.25px;letter-spacing:-0.654px">HAUL_IN</div>
<div class="abs td" style="left:1376px;top:940.25px;letter-spacing:0.049px">Travel lift 300T</div>
<svg class="abs" style="left:909.5px;top:851.5px;width:28px;height:28px" viewBox="0 0 24 24"><path fill="#212121" d="M19 6.41L17.59 5 12 10.59 6.41 5 5 6.41 10.59 12 5 17.59 6.41 19 12 13.41 17.59 19 19 17.59 13.41 12z"/></svg>
<div class="abs" style="left:1629px;top:5px;width:17px;height:956px;background:#fbfbfd"></div>
<svg class="abs" style="left:1629px;top:5px;width:17px;height:956px" viewBox="1629 5 17 956"><path fill="#8b8b8b" d="M1638.8 10.3 L1645 19 Q1645.3 19.7 1644.5 19.7 L1633.1 19.7 Q1632.3 19.7 1632.6 19 Z"/><rect x="1633" y="28" width="10.8" height="786" rx="5.4" fill="#8b8b8b"/><path fill="#8b8b8b" d="M1638.8 957.5 L1645 949 Q1645.3 948.3 1644.5 948.3 L1633.1 948.3 Q1632.3 948.3 1632.6 949 Z"/></svg>
</body></html>
